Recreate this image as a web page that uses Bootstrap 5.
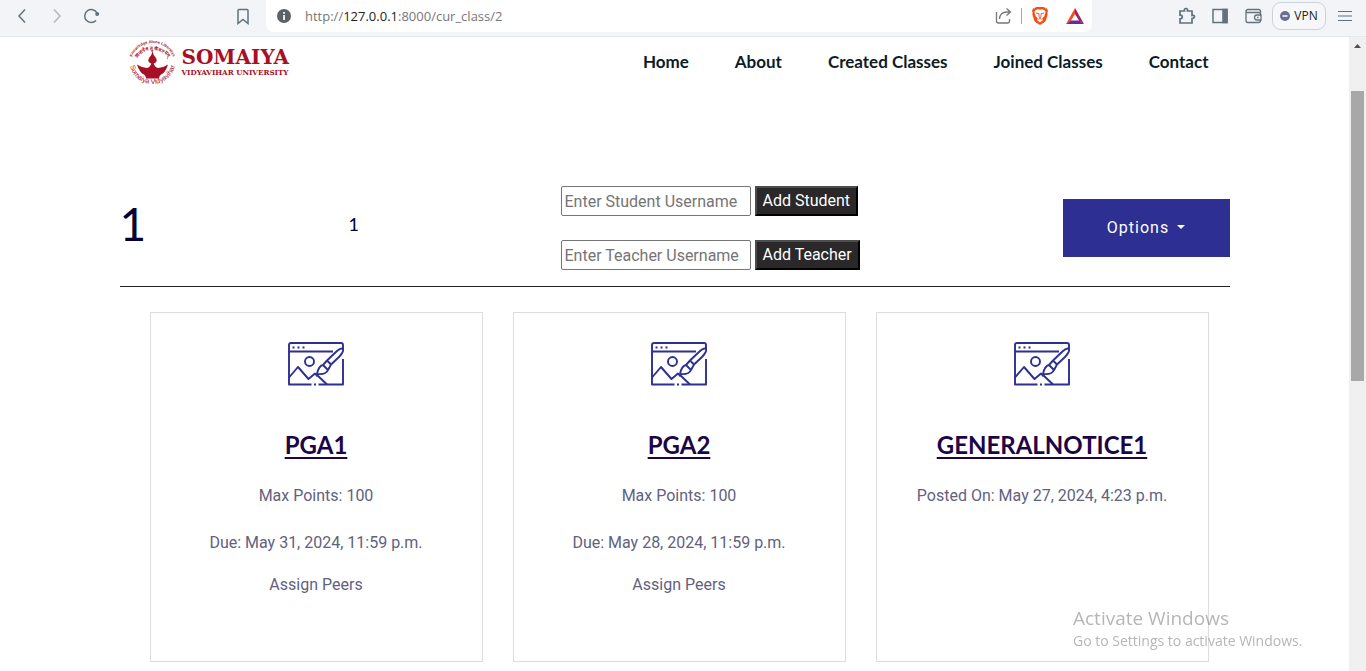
<!DOCTYPE html>
<html lang="en">
<head>
<meta charset="utf-8">
<meta name="viewport" content="width=device-width, initial-scale=1">
<title>Class 1</title>
<link href="https://cdn.jsdelivr.net/npm/bootstrap@5.3.0/dist/css/bootstrap.min.css" rel="stylesheet">
<style>
  :root { --ink: #000033; --brand: #2d2f92; --crimson: #a90f24; }
  body { font-family: Roboto, "Liberation Sans", sans-serif; font-size: 16px; line-height: 24px; color: var(--ink); background: #fff; }
  svg { display: block; flex: none; }
  svg.line { fill: none; stroke: #61727d; stroke-width: 1.5; }
  .plain { border: 0; background: none; padding: 0; }

  /* browser toolbar */
  .toolbar { height: 37px; background: #f2f4f7; border-bottom: 1px solid #e6e8eb; padding-bottom: 4px; }
  .tools-left { width: 266px; padding: 0 16px; gap: 18px; }
  .tools-right { width: 274px; padding-right: 14px; }
  .address { background: #fff; border-radius: 0 0 8px 8px; padding: 0 0 0 11px; gap: 0; }
  .url { font: 13px/20px "Open Sans", sans-serif; color: #777; margin-left: 14px; }
  .url b { font-weight: 400; color: #222; }
  .divider { width: 1px; height: 16px; background: #aaa; }
  .vpn { width: 54px; height: 28px; border: 1px solid #c9d3dc; border-radius: 9px; background: #f6f7f9; font: 12px/16px "Open Sans", sans-serif; color: #222; }

  /* page */
  .viewport { min-height: 0; }
  .page { max-width: 1140px; padding: 0 15px; }
  .brand-line { color: var(--crimson); font-family: "DejaVu Serif", serif; font-weight: 700; }
  .brand-name { font-size: 20px; line-height: 20px; }
  .brand-sub { font-family: "DejaVu Serif Condensed", "DejaVu Serif", serif; font-size: 8px; line-height: 10px; }
  .emblem { overflow: visible; }
  .site-head { height: 50px; padding: 0 21px 0 8px; }
  .menu { gap: 46px; font: 700 17px/24px Lato, sans-serif; }
  .menu a { color: #0b1c26; text-decoration: none; }
  .class-head { margin-top: 99px; padding-bottom: 16px; border-bottom: 1px solid #222; display: grid; grid-template-columns: 229px 212px 1fr auto; align-items: center; }
  .class-head h1 { font: 400 46px/56px Lato, sans-serif; margin: 0 0 8px; }
  .class-code { font: 400 18px/24px Lato, sans-serif; margin-bottom: 8px; }
  .add-row input { width: 190px; height: 30px; border: 1px solid #767676; border-radius: 2px; padding: 1px 3px; }
  .add-row input::placeholder { color: #757575; }
  .add-row button { height: 30px; color: #fff; background: #2a2829; border: 2px solid; border-color: #4d4d4d #000 #000 #4d4d4d; padding: 1px 6px; }
  .options { width: 167px; height: 58px; border: 0; border-radius: 0; background: var(--brand); color: #fff; letter-spacing: 1px; font-size: 16px; font-weight: 400; }
  .options:hover { background: #24267a; color: #fff; }
  .options::after { font-size: 14px; margin-left: 8px; }
  .tiles { margin-top: 25px; padding: 0 21px 0 30px; display: grid; grid-template-columns: repeat(3, 1fr); gap: 30px; }
  .tile { height: 350px; border: 1px solid #ddd; padding-top: 29px; text-align: center; color: #5f6280; }
  .tile h2 { font: 700 24px/32px Lato, sans-serif; margin: 43px 0 23px; }
  .tile h2 a { color: #1c0546; text-decoration: underline; text-decoration-thickness: 2px; text-underline-offset: 3px; }
  .tile p { margin: 0 0 23px; }
  .tile p:last-of-type { margin-bottom: 18px; }
  .tile .peers { color: inherit; text-decoration: none; }
  .rail { width: 17px; background: #f0f0f0; padding-top: 7px; }
  .thumb { width: 13px; height: 290px; background: #a8a8a8; margin-top: 43px; }
  .activate { position: fixed; right: 57px; bottom: 20px; width: 236px; color: rgba(110,110,110,.5); font-family: "Open Sans", sans-serif; pointer-events: none; }
  .activate div { font-size: 19px; line-height: 26px; }
  .activate span { display: block; font-size: 14px; line-height: 20px; }
</style>
</head>
<body class="vh-100 overflow-hidden d-flex flex-column">
<svg width="0" height="0" class="position-absolute">
  <symbol id="art" viewBox="0 0 56 44">
    <g fill="none" stroke="#2d2f92" stroke-width="1.9" stroke-linejoin="round">
      <path d="M23.500 42.500H1V3Q1 1 3 1H53Q55 1 55 3V8M55 17V42.500H30.500"/>
      <path d="M1 9.500H45M26 42.500h2"/>
      <circle cx="21.500" cy="19.500" r="4.500"/>
      <path d="M1 35.500 10 25 20.500 37 27 31.500 29.500 34.500M29 33 39 42.500"/>
      <path d="M29 32Q30.500 24 35 23L40 28Q38 33 29 32ZM35 23 39 18.500 43 22.500 40 28M39 18.500 49 9Q54 5 55 7.500 56 9.500 51 15L43 22.500"/>
    </g>
    <path d="M4.500 4.500h2v2h-2zM9.500 4.500h2v2h-2zM14.500 4.500h2v2h-2z" fill="#2d2f92"/>
  </symbol>
</svg>

<div class="toolbar d-flex">
  <div class="tools-left d-flex align-items-center">
    <button class="plain" aria-label="Back"><svg class="line" width="16" height="16" viewBox="0 0 16 16"><path d="M9 1.500 3 8l6 6.500"/></svg></button>
    <button class="plain" aria-label="Forward"><svg class="line" width="16" height="16" viewBox="0 0 16 16" opacity=".45"><path d="M4 1.500 10 8l-6 6.500"/></svg></button>
    <button class="plain" aria-label="Reload"><svg class="line" width="16" height="16" viewBox="0 0 16 16"><path d="M12 12.500A6.500 6.500 0 1 1 13 5"/><circle cx="13.200" cy="6" r="2" fill="#61727d" stroke="none"/></svg></button>
    <button class="plain ms-auto" aria-label="Bookmark"><svg class="line" width="14" height="17" viewBox="0 0 14 17"><path d="M3 1.500h8q1 0 1 1v13L7 11.500 2 15.500v-13q0-1 1-1z"/></svg></button>
  </div>
  <div class="address flex-grow-1 d-flex align-items-center">
    <svg width="14" height="14" viewBox="0 0 14 14"><circle cx="7" cy="7" r="7" fill="#5c6166"/><path d="M6.200 3h1.700v1.700H6.200zM6.200 6h1.700v5H6.200z" fill="#fff"/></svg>
    <div class="url me-auto">http://<b>127.0.0.1</b>:8000/cur_class/2</div>
    <button class="plain" aria-label="Share"><svg width="18" height="18" viewBox="0 0 18 18" fill="none" stroke="#777" stroke-width="1.300"><path d="M1.500 5v9q0 2 2 2h9q2 0 2-2v-2M4.500 12Q5 5 12 5h3M11.500 1.500 15.500 5l-4 3.500"/></svg></button>
    <div class="divider ms-2"></div>
    <button class="plain ms-2" aria-label="Brave Shields"><svg width="20" height="18" viewBox="0 0 20 18"><path d="M6 0h8l1.500 1.500 1.500-.2 1 2.700-.7 1.500.4 1.500-1.700 6q-.4 1.500-2 2.500L10 18l-4-2.500q-1.600-1-2-2.500l-1.700-6 .4-1.500L2 4l1-2.700 1.500.2z" fill="#fb4b14"/><path d="M10 2.800 12 2.300 15 3.500 15.500 5.500 14.200 9.500l-2 1.700.8 1.800L10 15.500 7 13l.8-1.800-2-1.700L4.500 5.500 5 3.500 8 2.300z" fill="#fff"/><path d="M6 6l3 .7v2.500L10 11l1-1.800V6.700L14 6M8.300 12.300l1.700-.8 1.700.8" fill="none" stroke="#fb4b14" stroke-width=".9"/></svg></button>
    <button class="plain ms-3 me-2" aria-label="Brave Rewards"><svg width="18" height="16" viewBox="0 0 18 16"><path d="M9 0 0 16 5 12.500 9 6z" fill="#ff4724"/><path d="M9 0 18 16 13 12.500 9 6z" fill="#9e1f63"/><path d="M0 16h18l-5-3.500H5z" fill="#662d91"/></svg></button>
  </div>
  <div class="tools-right d-flex align-items-center justify-content-end">
    <button class="plain me-3" aria-label="Extensions"><svg class="line" width="18" height="18" viewBox="0 0 18 18"><path stroke-width="1.700" d="M2 4H6.500Q6 1.500 8 1.500T9.500 4H14v4.500q2.500-.5 2.500 1T14 11.500V16H2v-4.200q2.300 0 2.300-1.800T2 8.200z"/></svg></button>
    <button class="plain me-3" aria-label="Sidebar"><svg class="line" width="16" height="16" viewBox="0 0 16 16"><path d="M1 1.500h14v13H1z"/><path d="M11 1.500h4v13h-4z" fill="#61727d"/></svg></button>
    <button class="plain me-2" aria-label="Wallet"><svg class="line" width="20" height="18" viewBox="0 0 20 18"><path d="M16.500 7.500V4.500q0-2-2-2H4Q2 2.500 2 4.500v9q0 2 2 2H14.500q2 0 2-2M2 5.500h13q1.500 0 1.500 2M17 8h-4q-2.500 0-2.500 2.500T13 13h4zM13 10.500h1.500" stroke-width="1.300"/></svg></button>
    <button class="vpn d-flex align-items-center justify-content-center gap-1 p-0"><svg width="10" height="10" viewBox="0 0 10 10"><circle cx="5" cy="5" r="5" fill="#6a6f92"/><path d="M2.500 5h5" stroke="#fff" stroke-width="1.500"/></svg>VPN</button>
    <button class="plain ms-2 ps-1" aria-label="Menu"><svg class="line" width="14" height="12" viewBox="0 0 14 12"><path d="M0 1.500h14M0 6h14M0 10.500h14" stroke-width="1.200"/></svg></button>
  </div>
</div>

<div class="viewport d-flex flex-grow-1">
  <div class="flex-grow-1 overflow-hidden">
    <div class="page mx-auto">
      <header class="site-head d-flex align-items-center justify-content-between">
        <a href="#" class="d-flex align-items-center text-decoration-none brand-line">
          <svg class="emblem" width="50" height="50" viewBox="0 0 50 50" aria-hidden="true">
            <path id="arc-a" d="M3 26A21.500 20 0 0 1 46 26" fill="none"/>
            <path id="arc-b" d="M7 28A17.500 15 0 0 1 42 28" fill="none"/>
            <path id="arc-c" d="M1.500 24A23 23 0 0 0 47.500 24" fill="none"/>
            <g fill="#a90f24" font-family="Liberation Sans, sans-serif" font-weight="700">
              <text font-size="4" text-anchor="middle"><textPath href="#arc-a" startOffset="50%">Knowledge Alone Liberates</textPath></text>
              <text font-size="5" text-anchor="middle"><textPath href="#arc-b" startOffset="50%">ज्ञानादेव तु कैवल्यम्</textPath></text>
              <text font-size="7" font-weight="400" text-anchor="middle"><textPath href="#arc-c" startOffset="50%">Somaiya Vidyavihar</textPath></text>
              <path d="M24.500 14Q25 18 28 21 30.500 25.500 24.500 27 18.500 25.500 21 21 24 18 24.500 14z"/>
              <path d="M9 27.500Q14 31 19 31 22 30.500 23.500 26h2Q27 30.500 30 31 35 31 40 27.500 37.500 35 34 37 31 38.500 31 41.500H18Q18 38.500 15 37 11.500 35 9 27.500z"/>
            </g>
          </svg>
          <span class="ms-1"><span class="d-block brand-name">SOMAIYA</span><span class="d-block brand-sub">VIDYAVIHAR UNIVERSITY</span></span>
        </a>
        <nav class="menu d-flex">
          <a href="#">Home</a><a href="#">About</a><a href="#">Created Classes</a><a href="#">Joined Classes</a><a href="#">Contact</a>
        </nav>
      </header>

      <section class="class-head">
        <h1>1</h1>
        <div class="class-code">1</div>
        <div>
          <form class="add-row d-flex gap-1 mb-4"><input type="text" aria-label="Student username" placeholder="Enter Student Username"><button type="button">Add Student</button></form>
          <form class="add-row d-flex gap-1"><input type="text" aria-label="Teacher username" placeholder="Enter Teacher Username"><button type="button">Add Teacher</button></form>
        </div>
        <div class="dropdown"><button class="btn options dropdown-toggle" type="button" data-bs-toggle="dropdown">Options</button></div>
      </section>

      <section class="tiles">
        <article class="tile"><svg class="mx-auto" width="56" height="44"><use href="#art"/></svg>
          <h2><a href="#">PGA1</a></h2><p>Max Points: 100</p><p>Due: May 31, 2024, 11:59 p.m.</p><a href="#" class="peers">Assign Peers</a></article>
        <article class="tile"><svg class="mx-auto" width="56" height="44"><use href="#art"/></svg>
          <h2><a href="#">PGA2</a></h2><p>Max Points: 100</p><p>Due: May 28, 2024, 11:59 p.m.</p><a href="#" class="peers">Assign Peers</a></article>
        <article class="tile"><svg class="mx-auto" width="56" height="44"><use href="#art"/></svg>
          <h2><a href="#">GENERALNOTICE1</a></h2><p>Posted On: May 27, 2024, 4:23 p.m.</p></article>
      </section>
    </div>
  </div>
  <div class="rail flex-shrink-0">
    <svg class="mx-auto" width="7" height="4" viewBox="0 0 7 4"><path d="M3.500 0 7 4H0z" fill="#505050"/></svg>
    <div class="thumb mx-auto"></div>
  </div>
</div>

<div class="activate"><div>Activate Windows</div><span>Go to Settings to activate Windows.</span></div>
<script src="https://cdn.jsdelivr.net/npm/bootstrap@5.3.0/dist/js/bootstrap.bundle.min.js"></script>
</body>
</html>
